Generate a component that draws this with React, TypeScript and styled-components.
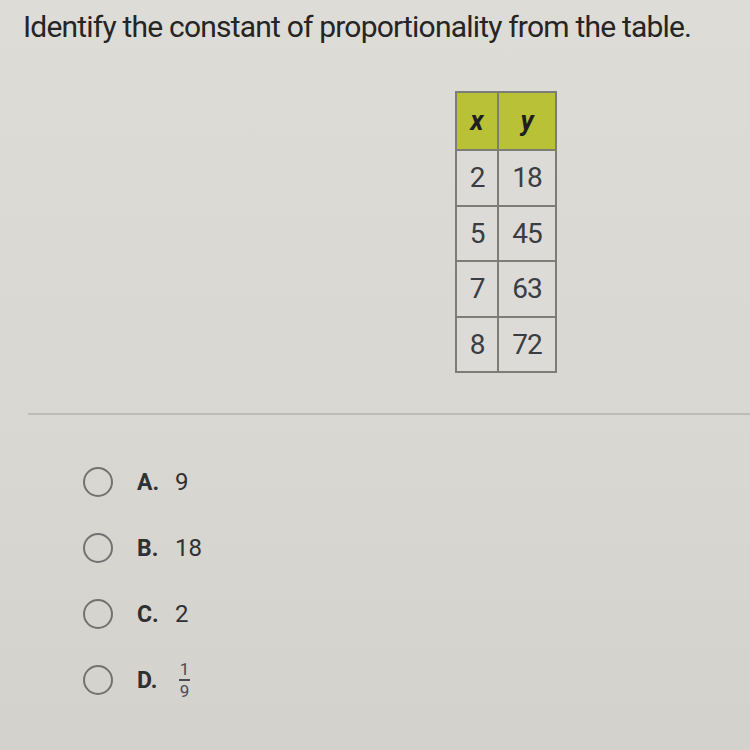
import React from "react";
import styled, { createGlobalStyle } from "styled-components";

const Global = createGlobalStyle`
  html, body { margin: 0; padding: 0; }
  body {
    background: #d8d7d2;
    font-family: Roboto, "Liberation Sans", Arial, sans-serif;
    color: #2b2b2b;
  }
`;

const Page = styled.div`
  width: 750px;
  height: 750px;
  overflow: hidden;
  background: linear-gradient(180deg, #dedcd7 0%, #d9d8d3 50%, #d3d2cd 100%);
  display: flex;
  flex-direction: column;
`;

const Title = styled.h1`
  margin: 9px 0 0 23px;
  font-size: 30px;
  line-height: 36px;
  font-weight: 400;
  letter-spacing: -0.8px;
  color: #252525;
  white-space: nowrap;
`;

const TableWrap = styled.div`
  margin: 46px 0 0 455px;
`;

const Table = styled.table`
  border-collapse: collapse;
  font-size: 28px;
  color: #3a3d42;
`;

const Th = styled.th<{ $w: number }>`
  background: #b9c237;
  border: 2px solid #7d7d78;
  height: 56px;
  width: ${(p) => p.$w}px;
  font-style: italic;
  font-weight: 700;
  font-size: 27px;
  color: #1f1f1f;
  padding: 0;
`;

const Td = styled.td`
  background: #dcdbd7;
  border: 2px solid #7d7d78;
  height: 53.5px;
  text-align: center;
  padding: 0;
  letter-spacing: -1px;
`;

const Divider = styled.div`
  margin: 40px 0 0 28px;
  height: 2px;
  background: #bcbcb8;
`;

const Options = styled.div`
  margin: 52px 0 0 83px;
  display: flex;
  flex-direction: column;
  gap: 36px;
`;

const Option = styled.div`
  display: flex;
  align-items: center;
  height: 30px;
`;

const Radio = styled.span`
  box-sizing: border-box;
  width: 30px;
  height: 30px;
  border-radius: 50%;
  border: 2.5px solid #727270;
  flex: none;
`;

const Letter = styled.span`
  margin-left: 24px;
  width: 38px;
  font-weight: 700;
  font-size: 23px;
  color: #2f3033;
`;

const Value = styled.span`
  font-size: 24px;
  color: #2f3033;
`;

const Frac = styled.span`
  display: inline-flex;
  flex-direction: column;
  align-items: center;
  font-size: 17px;
  line-height: 16px;
  color: #4a4c52;
  margin-left: 4px;
`;

const FracLine = styled.span`
  width: 11px;
  height: 1.5px;
  background: #4a4c52;
  margin: 2px 0;
`;

const rows = [
  [2, 18],
  [5, 45],
  [7, 63],
  [8, 72],
];

export default function App() {
  return (
    <>
      <Global />
      <Page>
        <Title>Identify the constant of proportionality from the table.</Title>
        <TableWrap>
          <Table>
            <thead>
              <tr>
                <Th $w={40}>x</Th>
                <Th $w={56}>y</Th>
              </tr>
            </thead>
            <tbody>
              {rows.map(([x, y]) => (
                <tr key={x}>
                  <Td>{x}</Td>
                  <Td>{y}</Td>
                </tr>
              ))}
            </tbody>
          </Table>
        </TableWrap>
        <Divider />
        <Options>
          <Option>
            <Radio />
            <Letter>A.</Letter>
            <Value>9</Value>
          </Option>
          <Option>
            <Radio />
            <Letter>B.</Letter>
            <Value>18</Value>
          </Option>
          <Option>
            <Radio />
            <Letter>C.</Letter>
            <Value>2</Value>
          </Option>
          <Option>
            <Radio />
            <Letter>D.</Letter>
            <Frac>
              <span>1</span>
              <FracLine />
              <span>9</span>
            </Frac>
          </Option>
        </Options>
      </Page>
    </>
  );
}
